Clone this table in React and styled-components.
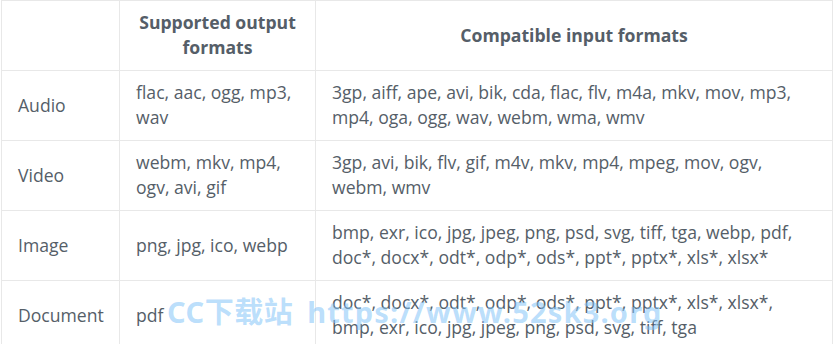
import styled, { createGlobalStyle } from 'styled-components';

const rows = [
  {
    kind: 'Audio',
    output: 'flac, aac, ogg, mp3, wav',
    input:
      '3gp, aiff, ape, avi, bik, cda, flac, flv, m4a, mkv, mov, mp3, mp4, oga, ogg, wav, webm, wma, wmv',
  },
  {
    kind: 'Video',
    output: 'webm, mkv, mp4, ogv, avi, gif',
    input: '3gp, avi, bik, flv, gif, m4v, mkv, mp4, mpeg, mov, ogv, webm, wmv',
  },
  {
    kind: 'Image',
    output: 'png, jpg, ico, webp',
    input:
      'bmp, exr, ico, jpg, jpeg, png, psd, svg, tiff, tga, webp, pdf, doc*, docx*, odt*, odp*, ods*, ppt*, pptx*, xls*, xlsx*',
  },
  {
    kind: 'Document',
    output: 'pdf',
    input:
      'doc*, docx*, odt*, odp*, ods*, ppt*, pptx*, xls*, xlsx*, bmp, exr, ico, jpg, jpeg, png, psd, svg, tiff, tga',
  },
];

function App() {
  return (
    <>
      <GlobalStyle />
      <Page>
        <Table>
          <colgroup>
            <col style={{ width: 118 }} />
            <col style={{ width: 196 }} />
            <col style={{ width: 517 }} />
          </colgroup>
          <thead>
            <tr>
              <HeadCell />
              <HeadCell>Supported output formats</HeadCell>
              <HeadCell>Compatible input formats</HeadCell>
            </tr>
          </thead>
          <tbody>
            {rows.map((row) => (
              <tr key={row.kind}>
                <Cell>{row.kind}</Cell>
                <Cell>{row.output}</Cell>
                <Cell>{row.input}</Cell>
              </tr>
            ))}
          </tbody>
        </Table>
        <Watermark>
          CC下载站 <Url>https://www.52sk3.org</Url>
        </Watermark>
      </Page>
    </>
  );
}

export default App;

const GlobalStyle = createGlobalStyle`
  body {
    margin: 0;
    background: #fff;
    font-family: "Open Sans", "Noto Sans", sans-serif;
  }
`;
const Page = styled.div`
  height: 344px;
  overflow: hidden;
  padding-left: 1px;
  position: relative;
`;
const Table = styled.table`
  border-collapse: collapse;
  color: #555e68;
  font-size: 17.6px;
  line-height: 25px;
  table-layout: fixed;
  width: 832px;
`;
const Cell = styled.td`
  border: 1px solid #e8e8e8;
  height: 50px;
  padding: 9px 16px 10px;
  vertical-align: middle;
`;
const HeadCell = styled(Cell).attrs({ as: 'th' })`
  font-weight: 700;
  height: 48px;
  text-align: center;
`;
const Watermark = styled.div`
  color: rgba(130, 195, 248, 0.55);
  font-family: "Noto Sans", "Noto Sans CJK SC", sans-serif;
  font-size: 29px;
  font-weight: 700;
  left: 167px;
  letter-spacing: 0.5px;
  line-height: 40px;
  position: absolute;
  top: 292px;
  white-space: pre;
`;
const Url = styled.span`
  letter-spacing: 1.2px;
  margin-left: 6px;
`;
